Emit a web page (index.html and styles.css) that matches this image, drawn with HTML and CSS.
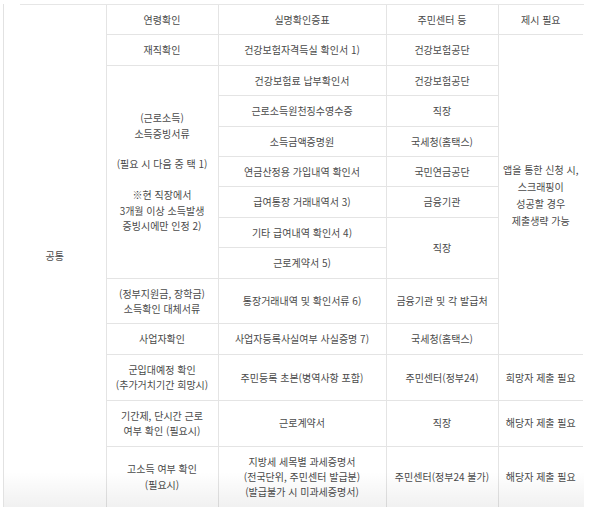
FILE: index.html
```html
<!DOCTYPE html>
<html lang="ko">
<head>
<meta charset="utf-8">
<link rel="stylesheet" href="styles.css">
</head>
<body>
<div class="wrap">
  <table class="docs">
    <colgroup>
      <col class="c1"><col class="c2"><col class="c3"><col class="c4"><col class="c5">
    </colgroup>
    <tbody>
      <tr>
        <td rowspan="14" class="group">공통</td>
        <td>연령확인</td>
        <td>실명확인증표</td>
        <td>주민센터 등</td>
        <td>제시 필요</td>
      </tr>
      <tr>
        <td>재직확인</td>
        <td>건강보험자격득실 확인서 1)</td>
        <td>건강보험공단</td>
        <td rowspan="10" class="note">앱을 통한 신청 시,<br>스크래핑이<br>성공할 경우<br>제출생략 가능</td>
      </tr>
      <tr>
        <td rowspan="7">(근로소득)<br>소득증빙서류<br><br>(필요 시 다음 중 택 1)<br><br>※현 직장에서<br>3개월 이상 소득발생<br>증빙시에만 인정 2)</td>
        <td>건강보험료 납부확인서</td>
        <td>건강보험공단</td>
      </tr>
      <tr>
        <td>근로소득원천징수영수증</td>
        <td>직장</td>
      </tr>
      <tr>
        <td>소득금액증명원</td>
        <td>국세청(홈택스)</td>
      </tr>
      <tr>
        <td>연금산정용 가입내역 확인서</td>
        <td>국민연금공단</td>
      </tr>
      <tr>
        <td>급여통장 거래내역서 3)</td>
        <td>금융기관</td>
      </tr>
      <tr>
        <td>기타 급여내역 확인서 4)</td>
        <td rowspan="2">직장</td>
      </tr>
      <tr>
        <td>근로계약서 5)</td>
      </tr>
      <tr>
        <td>(정부지원금, 장학금)<br>소득확인 대체서류</td>
        <td>통장거래내역 및 확인서류 6)</td>
        <td>금융기관 및 각 발급처</td>
      </tr>
      <tr>
        <td>사업자확인</td>
        <td>사업자등록사실여부 사실증명 7)</td>
        <td>국세청(홈택스)</td>
      </tr>
      <tr>
        <td>군입대예정 확인<br>(추가거치기간 희망시)</td>
        <td>주민등록 초본(병역사항 포함)</td>
        <td>주민센터(정부24)</td>
        <td>희망자 제출 필요</td>
      </tr>
      <tr>
        <td>기간제, 단시간 근로<br>여부 확인 (필요시)</td>
        <td>근로계약서</td>
        <td>직장</td>
        <td>해당자 제출 필요</td>
      </tr>
      <tr>
        <td>고소득 여부 확인<br>(필요시)</td>
        <td>지방세 세목별 과세증명서<br>(전국단위, 주민센터 발급분)<br>(발급불가 시 미과세증명서)</td>
        <td>주민센터(정부24 불가)</td>
        <td>해당자 제출 필요</td>
      </tr>
    </tbody>
  </table>
  <div class="fade"></div>
</div>
</body>
</html>
```

FILE: styles.css
```css
html, body {
  margin: 0;
  padding: 0;
  background: #ffffff;
}

body {
  font-family: "Noto Sans CJK KR", "Noto Sans", sans-serif;
  color: #4a4a4a;
}

.wrap {
  position: relative;
  margin: 4px 0 0 3px;
  width: 580px;
  border-left: 1px solid #e2e2e2;
  background: linear-gradient(#e6e6e6, #e6e6e6) 16px 0 / 564px 1px no-repeat;
  padding-top: 1px;
}

.docs {
  width: 579px;
  border-collapse: collapse;
  table-layout: fixed;
  font-size: 10px;
  line-height: 15.4px;
}

.c1 { width: 102px; }
.c2 { width: 112px; }
.c3 { width: 168px; }
.c4 { width: 112px; }
.c5 { width: 85px; }

.docs td {
  padding: 7px 3px;
  text-align: center;
  vertical-align: middle;
  border: 1px solid #e4e4e4;
  white-space: nowrap;
}

.docs td.note {
  line-height: 17px;
}

.docs tr:first-child td {
  border-top: none;
}

.docs td:last-child {
  border-right: none;
}

.docs td.group {
  border-left: none;
  border-bottom: none;
}

.docs tr:last-child td {
  border-bottom: 1px solid #d4d4d4;
}

.fade {
  position: absolute;
  left: 0;
  right: 0;
  bottom: 0;
  height: 36px;
  background: linear-gradient(rgba(0, 0, 0, 0), rgba(0, 0, 0, 0.06));
  pointer-events: none;
}
```
